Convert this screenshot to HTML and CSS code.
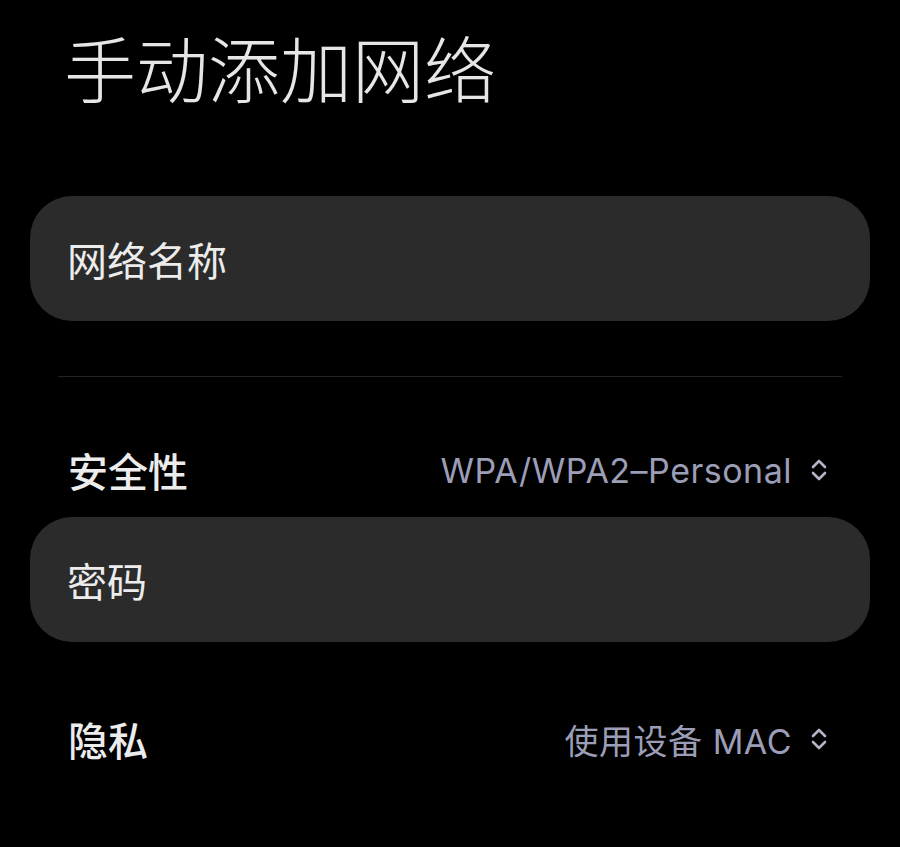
FILE: index.html
```html
<!DOCTYPE html>
<html lang="zh-CN">
<head>
<meta charset="utf-8">
<title>手动添加网络</title>
<link rel="stylesheet" href="styles.css">
</head>
<body>
<div class="page">
  <h1 class="title">手动添加网络</h1>
  <div class="field">网络名称</div>
  <div class="divider"></div>
  <div class="row">
    <span class="label">安全性</span>
    <span class="value">WPA/WPA2–Personal
      <svg class="chev" viewBox="0 0 18 26" width="18" height="26"><path d="M3 10 L9 4 L15 10 M3 16 L9 22 L15 16" fill="none" stroke="currentColor" stroke-width="2.6" stroke-linecap="round" stroke-linejoin="round"/></svg>
    </span>
  </div>
  <div class="field">密码</div>
  <div class="row row-last">
    <span class="label">隐私</span>
    <span class="value">使用设备 MAC
      <svg class="chev" viewBox="0 0 18 26" width="18" height="26"><path d="M3 10 L9 4 L15 10 M3 16 L9 22 L15 16" fill="none" stroke="currentColor" stroke-width="2.6" stroke-linecap="round" stroke-linejoin="round"/></svg>
    </span>
  </div>
</div>
</body>
</html>
```
FILE: styles.css
```css
html, body {
  margin: 0;
  padding: 0;
  background: #000;
}
body {
  font-family: "Noto Sans", "Noto Sans CJK SC", sans-serif;
  color: #e8e8e8;
  width: 900px;
  height: 847px;
  overflow: hidden;
}
.page {
  padding: 0 30px;
}
.title {
  margin: 0;
  padding-top: 33px;
  padding-left: 34px;
  font-size: 72px;
  line-height: 72px;
  font-weight: 300;
  color: #e6e6e6;
  height: 163px;
}
.field {
  height: 125px;
  border-radius: 42px;
  background: #2b2b2b;
  display: flex;
  align-items: center;
  padding-left: 37px;
  font-size: 40px;
  color: #ececec;
}
.divider {
  height: 1px;
  background: #232323;
  margin: 55px 28px 0;
}
.row {
  height: 94px;
  margin-top: 46px;
  display: flex;
  align-items: center;
  justify-content: space-between;
  padding: 0 42px 0 38px;
}
.row-last {
  margin-top: 50px;
}
.label {
  font-size: 40px;
  font-weight: 500;
  color: #ececec;
}
.value {
  display: flex;
  align-items: center;
  gap: 18px;
  font-family: "Inter", "Noto Sans CJK SC", sans-serif;
  font-size: 34px;
  letter-spacing: 0.5px;
  color: #9b9eb6;
}
.chev {
  display: block;
  color: #b3b5c6;
}
```
